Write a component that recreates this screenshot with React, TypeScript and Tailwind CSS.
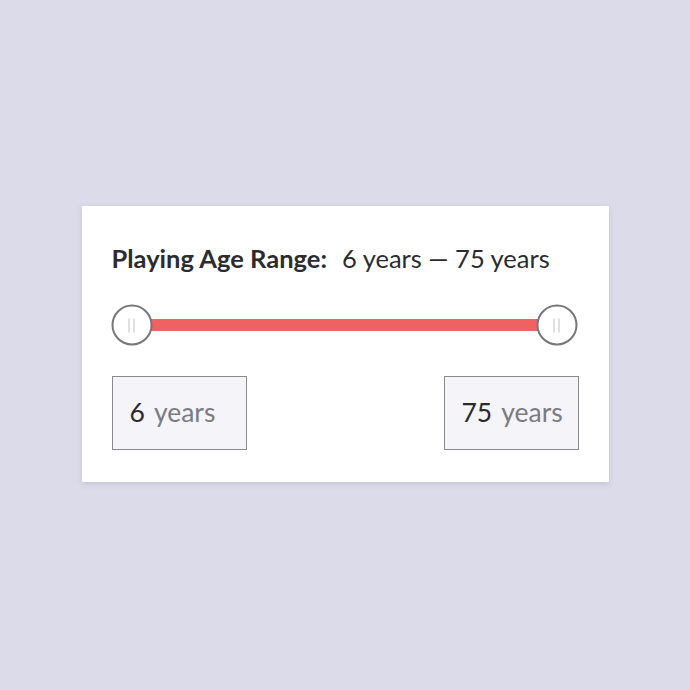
import React from 'react';

const FONT = { fontFamily: 'Lato, "Noto Sans", sans-serif' };

function Thumb({ left }: { left: number }) {
  return (
    <div
      className="absolute top-1/2 -translate-x-1/2 -translate-y-1/2 w-[41px] h-[41px] rounded-full bg-white border-2 border-[#76767b] flex items-center justify-center gap-[4px]"
      style={{ left }}
    >
      <span className="block w-px h-[14px] bg-[#c4c4c8]" />
      <span className="block w-px h-[14px] bg-[#c4c4c8]" />
    </div>
  );
}

function YearBox({ value }: { value: number }) {
  return (
    <div className="w-[135px] h-[74px] border border-[#8a8a8e] bg-[#f4f4f9] flex items-center pl-[17px] text-[26.5px]">
      <span className="text-[#2a2a2e]">{value}</span>
      <span className="ml-[9px] text-[#7b7b80]">years</span>
    </div>
  );
}

export default function App() {
  return (
    <div className="w-[690px] h-[690px] bg-[#dcdbe9] flex items-center justify-center" style={FONT}>
      <div className="w-[527px] h-[276px] bg-white shadow-[0_2px_6px_rgba(90,90,130,0.18)] px-[30px] pt-[37px] mt-[-2px]">
        <div className="flex items-baseline text-[25.5px] leading-[30px] text-[#2c2c30]">
          <span className="font-bold">Playing Age Range:</span>
          <span className="ml-[15px]">6 years — 75 years</span>
        </div>
        <div className="relative h-[42px] mt-[31px]">
          <div className="absolute left-[20px] right-[20px] top-[15px] h-[12px] bg-[#f06262]" />
          <Thumb left={20} />
          <Thumb left={445} />
        </div>
        <div className="flex justify-between mt-[30px]">
          <YearBox value={6} />
          <YearBox value={75} />
        </div>
      </div>
    </div>
  );
}
